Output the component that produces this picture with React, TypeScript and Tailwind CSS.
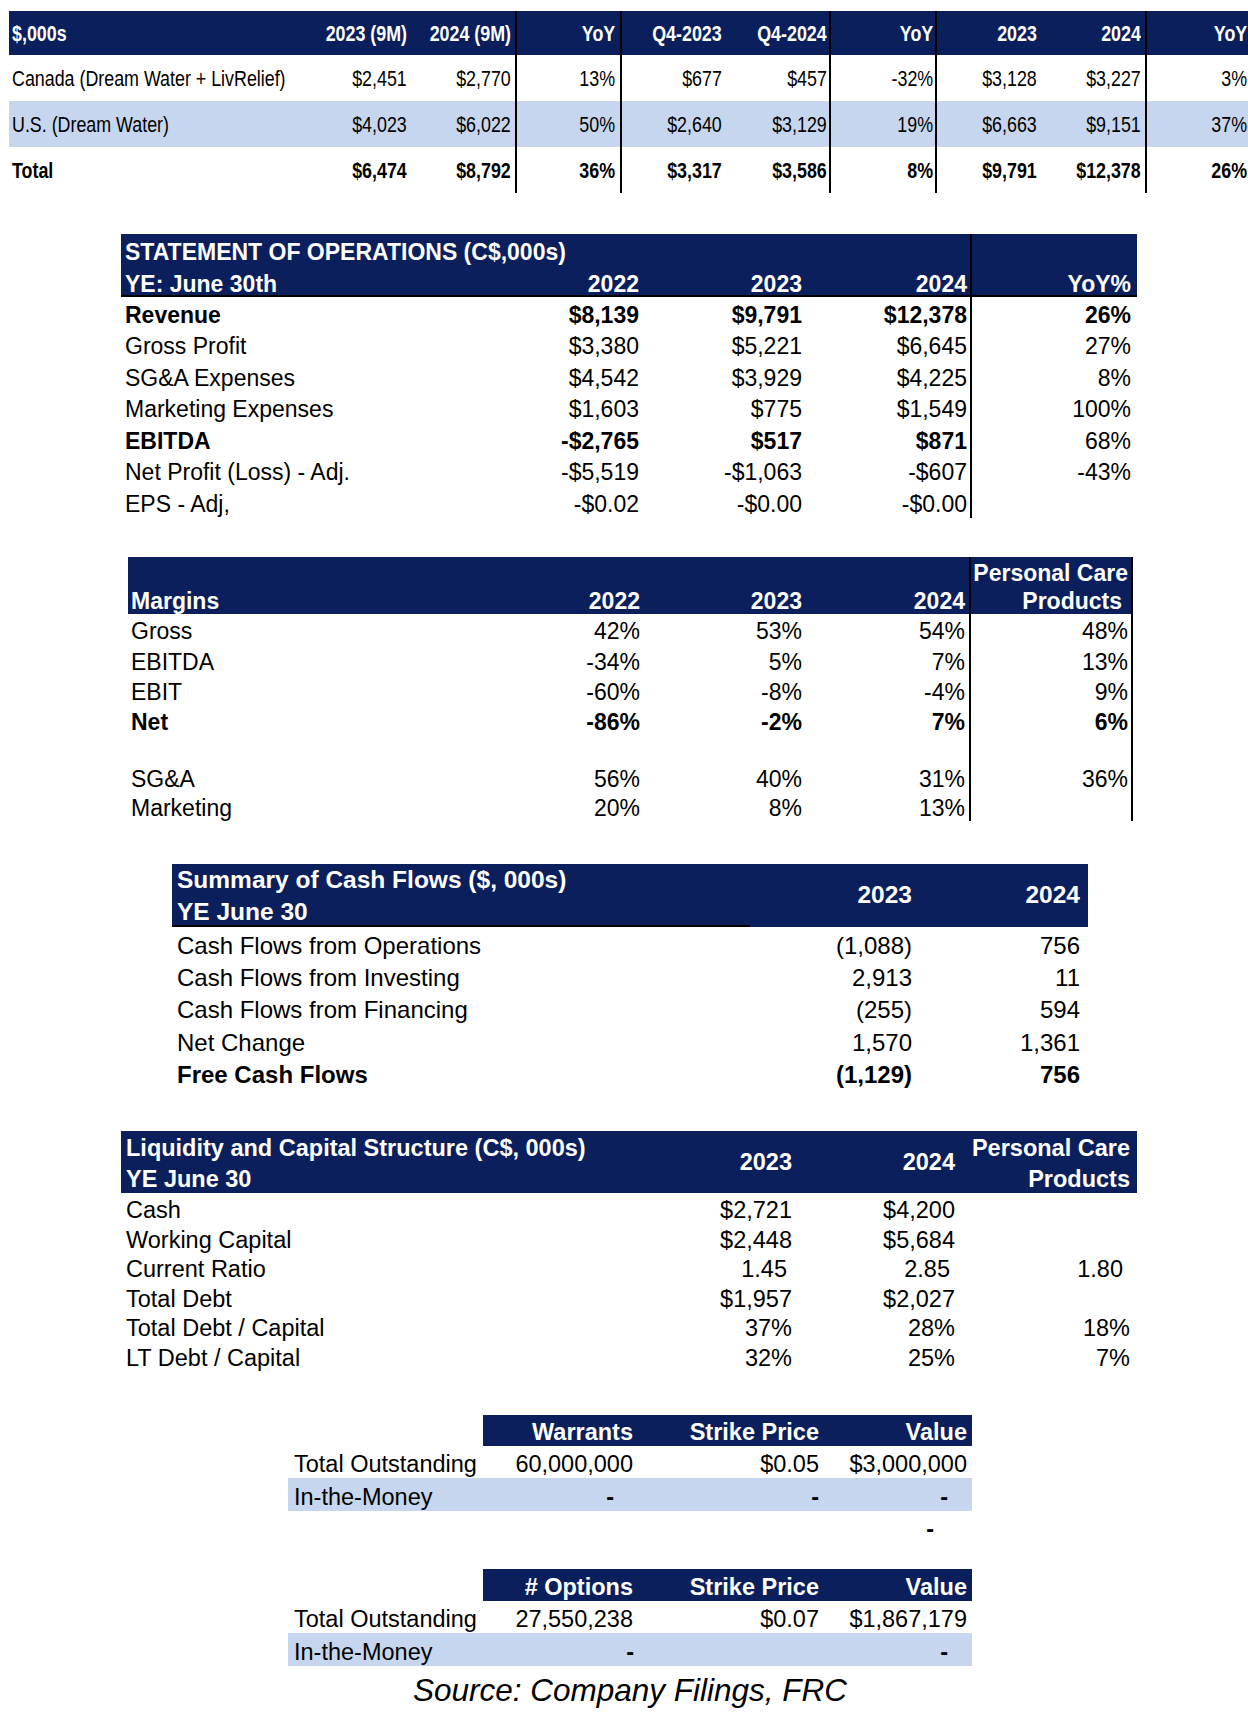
import React from 'react';

// shared colours
const navy = 'bg-[#0b1f5c]';
const pale = 'bg-[#c6d6ee]';

// ---------- segment revenue table (top) ----------
// Arial Narrow is not installed, so the text is squeezed horizontally instead
const segGrid = 'grid grid-cols-[294px_108px_106px_105px_104px_105px_106px_104px_106px_104px]';
const segCols = [
  'justify-start pl-[3px]',
  'justify-end pr-[4px]',
  'justify-end pr-[4px] border-r-2 border-black',
  'justify-end pr-[5px] border-r-2 border-black',
  'justify-end pr-[4px]',
  'justify-end pr-[2px] border-r-2 border-black',
  'justify-end pr-[2px] border-r-2 border-black',
  'justify-end pr-[4px]',
  'justify-end pr-[4px] border-r-2 border-black',
  'justify-end pr-[4px]',
];

const segHeader = ['$,000s', '2023 (9M)', '2024 (9M)', 'YoY', 'Q4-2023', 'Q4-2024', 'YoY', '2023', '2024', 'YoY'];
const segRows = [
  { cells: ['Canada (Dream Water + LivRelief)', '$2,451', '$2,770', '13%', '$677', '$457', '-32%', '$3,128', '$3,227', '3%'] },
  { cells: ['U.S. (Dream Water)', '$4,023', '$6,022', '50%', '$2,640', '$3,129', '19%', '$6,663', '$9,151', '37%'], bg: true },
  { cells: ['Total', '$6,474', '$8,792', '36%', '$3,317', '$3,586', '8%', '$9,791', '$12,378', '26%'], bold: true },
];

const Narrow = ({ text, left }: { text: string; left: boolean }) => (
  <span className={`inline-block whitespace-nowrap scale-x-[0.83] ${left ? 'origin-left' : 'origin-right'}`}>{text}</span>
);

const SegmentTable = () => (
  <div className="mt-[11px] ml-[9px] w-[1242px] text-[21.5px] leading-none">
    <div className={`${segGrid} h-[44px] ${navy} text-white font-bold`}>
      {segHeader.map((c, i) => (
        <div key={i} className={`flex items-center pt-[3px] ${segCols[i]}`}>
          <Narrow text={c} left={i === 0} />
        </div>
      ))}
    </div>
    {segRows.map((r, ri) => (
      <div key={ri} className={`${segGrid} h-[46px] ${r.bg ? pale : ''} ${r.bold ? 'font-bold' : ''}`}>
        {r.cells.map((c, i) => (
          <div key={i} className={`flex items-center pt-[4px] ${segCols[i]}`}>
            <Narrow text={c} left={i === 0} />
          </div>
        ))}
      </div>
    ))}
  </div>
);

// ---------- statement of operations ----------
const opsGrid = 'grid grid-cols-[357px_164px_164px_166px_165px]';
const opsCols = [
  'justify-start pl-[4px]',
  'justify-end pr-[3px]',
  'justify-end pr-[4px]',
  'justify-end pr-[3px] border-r-2 border-black',
  'justify-end pr-[6px]',
];
const opsRows = [
  { cells: ['Revenue', '$8,139', '$9,791', '$12,378', '26%'], bold: [1, 1, 1, 1, 1] },
  { cells: ['Gross Profit', '$3,380', '$5,221', '$6,645', '27%'] },
  { cells: ['SG&A Expenses', '$4,542', '$3,929', '$4,225', '8%'] },
  { cells: ['Marketing Expenses', '$1,603', '$775', '$1,549', '100%'] },
  { cells: ['EBITDA', '-$2,765', '$517', '$871', '68%'], bold: [1, 1, 1, 1, 0] },
  { cells: ['Net Profit (Loss) - Adj.', '-$5,519', '-$1,063', '-$607', '-43%'] },
  { cells: ['EPS - Adj,', '-$0.02', '-$0.00', '-$0.00', ''] },
];

const OperationsTable = () => (
  <div className="mt-[41px] ml-[121px] w-[1016px] text-[23px] leading-none">
    <div className={`${opsGrid} h-[33px] ${navy} text-white font-bold`}>
      <div className="col-span-4 flex items-center pl-[4px] pt-[3px] border-r-2 border-black whitespace-nowrap">
        STATEMENT OF OPERATIONS (C$,000s)
      </div>
      <div />
    </div>
    <div className={`${opsGrid} h-[30px] ${navy} text-white font-bold border-b-2 border-black`}>
      {['YE: June 30th', '2022', '2023', '2024', 'YoY%'].map((c, i) => (
        <div key={i} className={`flex items-center pt-[6px] whitespace-nowrap ${opsCols[i]}`}>{c}</div>
      ))}
    </div>
    {opsRows.map((r, ri) => (
      <div key={ri} className={`${opsGrid} h-[31.5px]`}>
        {r.cells.map((c, i) => (
          <div key={i} className={`flex items-center pt-[5px] whitespace-nowrap ${opsCols[i]} ${r.bold && r.bold[i] ? 'font-bold' : ''}`}>{c}</div>
        ))}
      </div>
    ))}
  </div>
);

// ---------- margins ----------
const marGrid = 'grid grid-cols-[348px_167px_163px_165px_162px]';
const marCols = [
  'justify-start pl-[3px]',
  'justify-end pr-[3px]',
  'justify-end pr-[4px]',
  'justify-end pr-[4px] border-r-2 border-black',
  'justify-end pr-[3px] border-r-2 border-black',
];
const marRows = [
  { cells: ['Gross', '42%', '53%', '54%', '48%'], h: 'h-[32px]' },
  { cells: ['EBITDA', '-34%', '5%', '7%', '13%'], h: 'h-[30px]' },
  { cells: ['EBIT', '-60%', '-8%', '-4%', '9%'], h: 'h-[30px]' },
  { cells: ['Net', '-86%', '-2%', '7%', '6%'], h: 'h-[29px]', bold: true },
  { cells: ['', '', '', '', ''], h: 'h-[28px]' },
  { cells: ['SG&A', '56%', '40%', '31%', '36%'], h: 'h-[29px]' },
  { cells: ['Marketing', '20%', '8%', '13%', ''], h: 'h-[29px]' },
];

const MarginsTable = () => (
  <div className="mt-[39px] ml-[128px] w-[1005px] text-[23px] leading-none">
    <div className={`${marGrid} h-[30px] ${navy} text-white font-bold`}>
      <div className="col-span-4 border-r-2 border-black" />
      <div className="flex items-center justify-end pr-[3px] pt-[4px] border-r-2 border-black whitespace-nowrap">Personal Care</div>
    </div>
    <div className={`${marGrid} h-[27px] ${navy} text-white font-bold`}>
      {['Margins', '2022', '2023', '2024', 'Products'].map((c, i) => (
        <div key={i} className={`flex items-center pt-[2px] whitespace-nowrap ${marCols[i]} ${i === 4 ? 'pr-[9px]' : ''}`}>{c}</div>
      ))}
    </div>
    {marRows.map((r, ri) => (
      <div key={ri} className={`${marGrid} ${r.h} ${r.bold ? 'font-bold' : ''}`}>
        {r.cells.map((c, i) => (
          <div key={i} className={`flex items-center pt-[4px] whitespace-nowrap ${marCols[i]}`}>{c}</div>
        ))}
      </div>
    ))}
  </div>
);

// ---------- cash flows ----------
const cfGrid = 'grid grid-cols-[578px_166px_172px]';
const cfRows = [
  ['Cash Flows from Operations', '(1,088)', '756'],
  ['Cash Flows from Investing', '2,913', '11'],
  ['Cash Flows from Financing', '(255)', '594'],
  ['Net Change', '1,570', '1,361'],
  ['Free Cash Flows', '(1,129)', '756'],
];

const CashFlowTable = () => (
  <div className="mt-[43px] ml-[172px] w-[916px] text-[24px] leading-none">
    <div className={`${cfGrid} h-[63px] ${navy} text-white font-bold text-[24.5px]`}>
      <div className="flex flex-col pl-[5px] pt-[1px] border-b-2 border-black whitespace-nowrap">
        <div className="h-[31px] flex items-center">Summary of Cash Flows ($, 000s)</div>
        <div className="h-[29px] flex items-center pt-[4px]">YE June 30</div>
      </div>
      <div className="flex items-center justify-end pr-[4px]">2023</div>
      <div className="flex items-center justify-end pr-[8px]">2024</div>
    </div>
    {cfRows.map((r, ri) => (
      <div key={ri} className={`${cfGrid} h-[32.4px] ${ri === 4 ? 'font-bold' : ''}`}>
        <div className="flex items-center pl-[5px] pt-[6px] whitespace-nowrap">{r[0]}</div>
        <div className="flex items-center justify-end pr-[4px] pt-[6px]">{r[1]}</div>
        <div className="flex items-center justify-end pr-[8px] pt-[6px]">{r[2]}</div>
      </div>
    ))}
  </div>
);

// ---------- liquidity ----------
const liqGrid = 'grid grid-cols-[515px_160px_163px_178px]';
const liqRows = [
  { cells: ['Cash', '$2,721', '$4,200', ''] },
  { cells: ['Working Capital', '$2,448', '$5,684', ''] },
  { cells: ['Current Ratio', '1.45', '2.85', '1.80'], ratio: true },
  { cells: ['Total Debt', '$1,957', '$2,027', ''] },
  { cells: ['Total Debt / Capital', '37%', '28%', '18%'] },
  { cells: ['LT Debt / Capital', '32%', '25%', '7%'] },
];

const LiquidityTable = () => (
  <div className="mt-[43px] ml-[121px] w-[1016px] text-[23.5px] leading-none">
    <div className={`${liqGrid} h-[62px] ${navy} text-white font-bold`}>
      <div className="flex flex-col pl-[5px] pt-[1px] whitespace-nowrap">
        <div className="h-[30px] flex items-center pt-[2px]">Liquidity and Capital Structure (C$, 000s)</div>
        <div className="h-[30px] flex items-center pt-[4px]">YE June 30</div>
      </div>
      <div className="flex items-center justify-end pr-[4px]">2023</div>
      <div className="flex items-center justify-end pr-[4px]">2024</div>
      <div className="flex flex-col items-end pr-[7px] pt-[1px] whitespace-nowrap">
        <div className="h-[30px] flex items-center pt-[2px]">Personal Care</div>
        <div className="h-[30px] flex items-center pt-[4px]">Products</div>
      </div>
    </div>
    {liqRows.map((r, ri) => (
      <div key={ri} className={`${liqGrid} h-[29.6px]`}>
        <div className="flex items-center pl-[5px] pt-[5px] whitespace-nowrap">{r.cells[0]}</div>
        <div className={`flex items-center justify-end pt-[5px] ${r.ratio ? 'pr-[9px]' : 'pr-[4px]'}`}>{r.cells[1]}</div>
        <div className={`flex items-center justify-end pt-[5px] ${r.ratio ? 'pr-[9px]' : 'pr-[4px]'}`}>{r.cells[2]}</div>
        <div className={`flex items-center justify-end pt-[5px] ${r.ratio ? 'pr-[14px]' : 'pr-[7px]'}`}>{r.cells[3]}</div>
      </div>
    ))}
  </div>
);

// ---------- warrants / options ----------
const dilGrid = 'grid grid-cols-[195px_154px_186px_149px]';

type DilCell = { t: string; pr: string; bold?: boolean };

const DilRow = ({ label, cells, h, bg }: { label: string; cells: DilCell[]; h: string; bg?: boolean }) => (
  <div className={`${dilGrid} ${h} ${bg ? pale : ''}`}>
    <div className="flex items-center pl-[6px] pt-[6px] whitespace-nowrap">{label}</div>
    {cells.map((c, i) => (
      <div key={i} className={`flex items-center justify-end pt-[6px] whitespace-nowrap ${c.pr} ${c.bold ? 'font-bold' : ''}`}>{c.t}</div>
    ))}
  </div>
);

const DilHeader = ({ first, h, shift }: { first: string; h: string; shift: string }) => (
  <div className={`${dilGrid} ${h} font-bold text-white`}>
    <div />
    <div className={`${navy} flex items-center justify-end pr-[4px] ${shift} whitespace-nowrap`}>{first}</div>
    <div className={`${navy} flex items-center justify-end pr-[4px] ${shift} whitespace-nowrap`}>Strike Price</div>
    <div className={`${navy} flex items-center justify-end pr-[5px] ${shift} whitespace-nowrap`}>Value</div>
  </div>
);

const DilutionTables = () => (
  <div className="mt-[44px] ml-[288px] w-[684px] text-[23.5px] leading-none">
    <DilHeader first="Warrants" h="h-[31px]" shift="pt-[4px]" />
    <DilRow
      label="Total Outstanding"
      h="h-[32px]"
      cells={[
        { t: '60,000,000', pr: 'pr-[4px]' },
        { t: '$0.05', pr: 'pr-[4px]' },
        { t: '$3,000,000', pr: 'pr-[5px]' },
      ]}
    />
    <DilRow
      label="In-the-Money"
      h="h-[33px]"
      bg
      cells={[
        { t: '-', pr: 'pr-[23px]', bold: true },
        { t: '-', pr: 'pr-[4px]', bold: true },
        { t: '-', pr: 'pr-[24px]', bold: true },
      ]}
    />
    <DilRow
      label=""
      h="h-[31px]"
      cells={[
        { t: '', pr: 'pr-[4px]' },
        { t: '', pr: 'pr-[4px]' },
        { t: '-', pr: 'pr-[38px]', bold: true },
      ]}
    />

    <div className="mt-[27px]">
      <DilHeader first="# Options" h="h-[32px]" shift="pt-[6px]" />
      <DilRow
        label="Total Outstanding"
        h="h-[32px]"
        cells={[
          { t: '27,550,238', pr: 'pr-[4px]' },
          { t: '$0.07', pr: 'pr-[4px]' },
          { t: '$1,867,179', pr: 'pr-[5px]' },
        ]}
      />
      <DilRow
        label="In-the-Money"
        h="h-[33px]"
        bg
        cells={[
          { t: '-', pr: 'pr-[3px]', bold: true },
          { t: '', pr: 'pr-[4px]' },
          { t: '-', pr: 'pr-[24px]', bold: true },
        ]}
      />
    </div>

    <div className="h-[46px] flex items-center justify-center pt-[4px] italic text-[31.5px] whitespace-nowrap">
      Source: Company Filings, FRC
    </div>
  </div>
);

export default function App() {
  return (
    <div className="w-[1248px] h-[1726px] overflow-hidden bg-white text-black font-['Liberation_Sans',Arial,sans-serif]">
      <SegmentTable />
      <OperationsTable />
      <MarginsTable />
      <CashFlowTable />
      <LiquidityTable />
      <DilutionTables />
    </div>
  );
}
